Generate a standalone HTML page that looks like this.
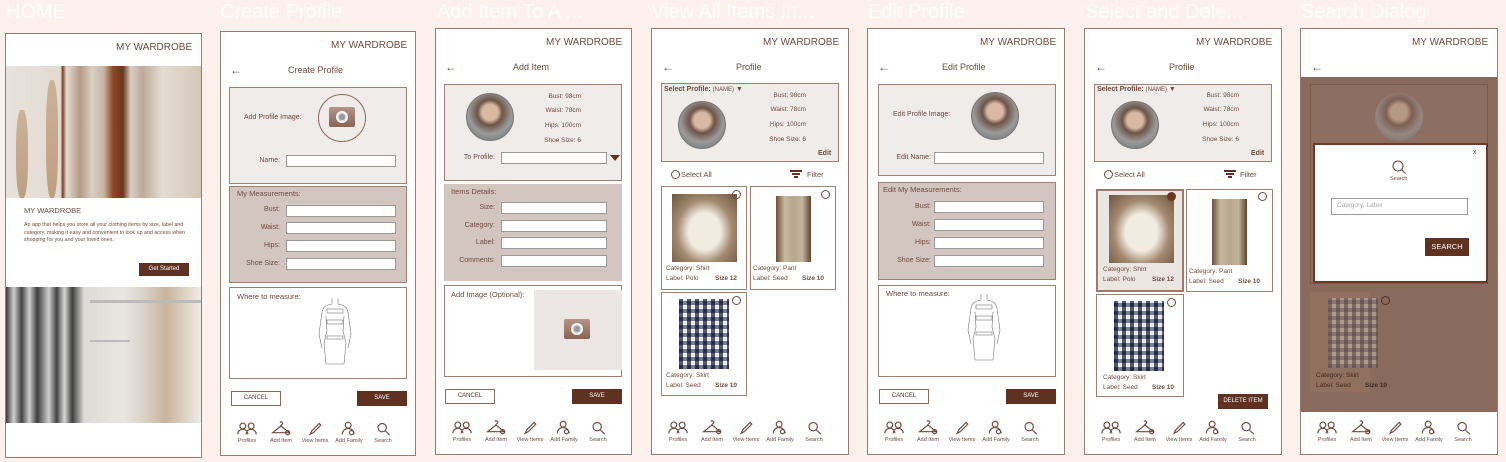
<!DOCTYPE html>
<html><head><meta charset="utf-8"><style>
*{box-sizing:border-box;margin:0;padding:0}
body{width:1506px;height:462px;background:#fcf1ec;position:relative;overflow:hidden;font-family:"Liberation Sans",sans-serif;color:#6e4b3f}
div,span,svg{position:absolute}
.fr{background:#fff;border:1px solid #9b7b6e}
.tt{font-size:20px;color:rgba(255,255,255,.75);top:1px;white-space:nowrap}
.hd{font-size:10px;color:#6e4b3f;white-space:nowrap}
.t{font-size:7px;white-space:nowrap}
.lt{background:#f0ece9;border:1px solid #a08070}
.dk{background:#d3c5bf;border:1px solid #a08070}
.wb{background:#fff;border:1px solid #a08070}
.in{background:#fff;border:1px solid #999;height:12px;width:110px}
.lb{font-size:7px;text-align:right;width:60px;white-space:nowrap}
.bc{border:1px solid #8b6a5e;background:#fff;font-size:6px;text-align:center;line-height:13px;width:50px;height:15px;color:#5e3120}
.bs{background:#5e3120;color:#fff;font-size:6px;text-align:center;line-height:15px;width:50px;height:15px}
.nav{width:170px;height:26px}
.nav>div{position:relative;display:inline-block;width:34px;height:26px;vertical-align:top}
.nav svg{left:7px;top:0;width:20px;height:15px;fill:none;stroke:#6e4b3f;stroke-width:1.4}
.nav span{left:0;top:17px;width:34px;text-align:center;font-size:5.5px;white-space:nowrap}
.av{border-radius:50%;background:radial-gradient(circle at 50% 40%,#d9b9a3 0 22%,#6c5446 35%,#9a9a9a 60%,#5d6b70 100%);border:1px solid #777}
.cam{width:26px;height:20px;border-radius:2px;background:linear-gradient(#b3958a,#8a6455)}
.cam::after{content:"";position:absolute;left:7px;top:4px;width:12px;height:12px;border-radius:50%;background:radial-gradient(#999 0 30%,#eee 50%,#fff 60%)}
.card{border:1px solid #a08070;background:#fff}
.rc{width:9px;height:9px;border-radius:50%;border:1px solid #6e4b3f}
.shirt{background:radial-gradient(ellipse at 50% 55%,#f1ebe0 0 35%,#a38a70 60%,#6b5442 100%)}
.pant{background:linear-gradient(90deg,#6b5036,#c8b9a2 25%,#b7a68d 50%,#c3b49d 75%,#5e4631)}
.skirt{background:repeating-linear-gradient(90deg,#23304c 0 4px,#e9e5e0 4px 8px),#333}
.skirt::after{content:"";position:absolute;inset:0;background:repeating-linear-gradient(0deg,rgba(30,40,70,.55) 0 4px,rgba(255,255,255,.2) 4px 8px)}
</style></head><body>

<div class="tt" style="left:6px">HOME</div>
<div class="tt" style="left:220px">Create Profile</div>
<div class="tt" style="left:437px">Add Item To A ...</div>
<div class="tt" style="left:651px">View All Items In...</div>
<div class="tt" style="left:868px">Edit Profile</div>
<div class="tt" style="left:1085px">Select and Dele...</div>
<div class="tt" style="left:1301px">Search Dialog</div>

<!-- FRAME 1 -->
<div class="fr" style="left:5px;top:33px;width:197px;height:425px"></div>
<div class="hd" style="left:116px;top:42px">MY WARDROBE</div>
<div style="left:6px;top:66px;width:195px;height:132px;background:linear-gradient(90deg,#e8e2dc 0,#e3dbd2 28%,#7a3f24 29%,#e3dbd2 31%,#b59a85 38%,#d9cfc3 44%,#c6b6a5 50%,#8e4525 55%,#6b3520 60%,#d8cfc5 64%,#bcaa98 70%,#e4ddd3 80%,#d4c7b7 100%)"></div>
<div style="left:16px;top:110px;width:12px;height:88px;background:linear-gradient(#c7a789,#b48f6c);border-radius:40%;opacity:.8"></div>
<div style="left:46px;top:80px;width:12px;height:118px;background:linear-gradient(#c7a789,#b48f6c);border-radius:40%;opacity:.8"></div>
<div class="t" style="left:24px;top:206px;font-size:7.5px">MY WARDROBE</div>
<div style="left:24px;top:222px;width:170px;font-size:5.3px;line-height:7.5px;white-space:normal">An app that helps you store all your clothing items by size, label and category, making it easy and convenient to look up and access when shopping for you and your loved ones.</div>
<div class="bs" style="left:139px;top:263px;height:13px;line-height:13px;font-size:6px">Get Started</div>
<div style="left:6px;top:287px;width:195px;height:136px;background:linear-gradient(90deg,#3a3a3a 0,#cfcfcf 4%,#444 8%,#d0d0d0 12%,#3d3d3d 16%,#cfcfcf 22%,#444 26%,#d8d8d8 30%,#3f3f3f 34%,#dedad5 40%,#eae6e1 60%,#d9cfc4 72%,#c9b39c 82%,#efece8 100%)"></div>
<div style="left:90px;top:300px;width:111px;height:3px;background:#bbb"></div>
<div style="left:90px;top:340px;width:40px;height:2px;background:#bbb"></div>

<!-- FRAME 2 -->
<div class="fr" style="left:220px;top:31px;width:196px;height:425px"></div>
<div class="hd" style="left:331px;top:40px">MY WARDROBE</div>
<div class="hd" style="left:230px;top:63px;font-size:12px">&#8592;</div>
<div class="hd" style="left:288px;top:65px;font-size:9px">Create Profile</div>
<div class="lt" style="left:229px;top:87px;width:178px;height:97px"></div>
<div class="t" style="left:244px;top:114px">Add Profile Image:</div>
<div style="left:318px;top:94px;width:48px;height:48px;border-radius:50%;border:1px solid #8b6a5e"></div>
<div class="cam" style="left:329px;top:107px"></div>
<div class="lb" style="left:220px;top:157px">Name:</div>
<div class="in" style="left:286px;top:155px"></div>
<div class="dk" style="left:229px;top:186px;width:178px;height:97px"></div>
<div class="t" style="left:237px;top:189px;font-size:7.5px">My Measurements:</div>
<div class="lb" style="left:220px;top:206px">Bust:</div><div class="in" style="left:286px;top:205px"></div>
<div class="lb" style="left:220px;top:224px">Waist:</div><div class="in" style="left:286px;top:222px"></div>
<div class="lb" style="left:220px;top:242px">Hips:</div><div class="in" style="left:286px;top:240px"></div>
<div class="lb" style="left:220px;top:260px">Shoe Size:</div><div class="in" style="left:286px;top:258px"></div>
<div class="wb" style="left:229px;top:287px;width:178px;height:92px"></div>
<div class="t" style="left:237px;top:292px;font-size:7.5px">Where to measure:</div>
<svg style="left:315px;top:296px;width:40px;height:70px" viewBox="0 0 40 70" fill="none" stroke="#777" stroke-width=".6"><path d="M17 2v6c-6 1-9 3-10 8l-3 22 3 14M23 2v6c6 1 9 3 10 8l3 22-3 14M11 20l1 15-3 12 2 21h18l2-21-3-12 1-15"/><rect x="12" y="13" width="16" height="4"/><rect x="12" y="24" width="16" height="4"/><rect x="12" y="40" width="16" height="3"/></svg>
<div class="bc" style="left:231px;top:391px">CANCEL</div>
<div class="bs" style="left:357px;top:391px">SAVE</div>
<div class="nav" style="left:230px;top:421px">
<div><svg viewBox="0 0 24 16"><circle cx="7" cy="5" r="3.5"/><circle cx="17" cy="5" r="3.5"/><path d="M1 15c0-4 3-6 6-6s6 2 6 6M11 15c0-4 3-6 6-6s6 2 6 6"/></svg><span>Profiles</span></div><div><svg viewBox="0 0 24 16"><path d="M11 6c0-2 3-2 3-4s-3-3-3-1M12 5L2 13h20z"/><circle cx="20" cy="13" r="2.5"/></svg><span>Add Item</span></div><div><svg viewBox="0 0 24 16"><path d="M6 15l2-4 9-9 2 2-9 9z"/></svg><span>View Items</span></div><div><svg viewBox="0 0 24 16"><circle cx="11" cy="4" r="3.5"/><path d="M4 15c0-4 3-7 7-7s7 3 7 7"/><circle cx="15" cy="13" r="2.5"/></svg><span>Add Family</span></div><div><svg viewBox="0 0 24 16"><circle cx="11" cy="7" r="5"/><path d="M15 11l5 5"/></svg><span>Search</span></div></div>

<!-- FRAME 3 -->
<div class="fr" style="left:435px;top:28px;width:197px;height:427px"></div>
<div class="hd" style="left:546px;top:37px">MY WARDROBE</div>
<div class="hd" style="left:445px;top:60px;font-size:12px">&#8592;</div>
<div class="hd" style="left:513px;top:62px;font-size:9px">Add Item</div>
<div class="lt" style="left:444px;top:84px;width:178px;height:97px"></div>
<div class="av" style="left:466px;top:93px;width:48px;height:48px"></div>
<div class="t" style="left:545px;top:93px;width:36px;text-align:right;font-size:6.5px">Bust: 98cm</div>
<div class="t" style="left:535px;top:107px;width:46px;text-align:right;font-size:6.5px">Waist: 78cm</div>
<div class="t" style="left:535px;top:122px;width:46px;text-align:right;font-size:6.5px">Hips: 100cm</div>
<div class="t" style="left:530px;top:137px;width:51px;text-align:right;font-size:6.5px">Shoe Size: 6</div>
<div class="lb" style="left:435px;top:154px">To Profile:</div>
<div class="in" style="left:501px;top:152px;width:106px"></div>
<div style="left:610px;top:155px;width:0;height:0;border-left:5px solid transparent;border-right:5px solid transparent;border-top:6px solid #5e3120"></div>
<div class="dk" style="left:444px;top:184px;width:178px;height:97px;border-color:#d3c5bf"></div>
<div class="t" style="left:451px;top:187px;font-size:7.5px">Items Details:</div>
<div class="lb" style="left:435px;top:204px">Size:</div><div class="in" style="left:501px;top:202px;width:106px"></div>
<div class="lb" style="left:435px;top:222px">Category:</div><div class="in" style="left:501px;top:220px;width:106px"></div>
<div class="lb" style="left:435px;top:239px">Label:</div><div class="in" style="left:501px;top:237px;width:106px"></div>
<div class="lb" style="left:435px;top:257px">Comments:</div><div class="in" style="left:501px;top:255px;width:106px"></div>
<div class="wb" style="left:444px;top:285px;width:178px;height:92px"></div>
<div class="t" style="left:451px;top:290px;font-size:7.5px">Add Image (Optional):</div>
<div style="left:534px;top:290px;width:88px;height:80px;background:#ece7e4"></div>
<div class="cam" style="left:564px;top:319px"></div>
<div class="bc" style="left:445px;top:389px">CANCEL</div>
<div class="bs" style="left:572px;top:389px">SAVE</div>
<div class="nav" style="left:445px;top:420px">
<div><svg viewBox="0 0 24 16"><circle cx="7" cy="5" r="3.5"/><circle cx="17" cy="5" r="3.5"/><path d="M1 15c0-4 3-6 6-6s6 2 6 6M11 15c0-4 3-6 6-6s6 2 6 6"/></svg><span>Profiles</span></div><div><svg viewBox="0 0 24 16"><path d="M11 6c0-2 3-2 3-4s-3-3-3-1M12 5L2 13h20z"/><circle cx="20" cy="13" r="2.5"/></svg><span>Add Item</span></div><div><svg viewBox="0 0 24 16"><path d="M6 15l2-4 9-9 2 2-9 9z"/></svg><span>View Items</span></div><div><svg viewBox="0 0 24 16"><circle cx="11" cy="4" r="3.5"/><path d="M4 15c0-4 3-7 7-7s7 3 7 7"/><circle cx="15" cy="13" r="2.5"/></svg><span>Add Family</span></div><div><svg viewBox="0 0 24 16"><circle cx="11" cy="7" r="5"/><path d="M15 11l5 5"/></svg><span>Search</span></div></div>

<!-- FRAME 4 -->
<div class="fr" style="left:651px;top:28px;width:198px;height:427px"></div>
<div class="hd" style="left:763px;top:37px">MY WARDROBE</div>
<div class="hd" style="left:662px;top:60px;font-size:12px">&#8592;</div>
<div class="hd" style="left:736px;top:62px;font-size:9px">Profile</div>
<div class="lt" style="left:661px;top:83px;width:178px;height:79px"></div>
<div class="t" style="left:664px;top:86px;font-weight:bold;font-size:7px">Select Profile: <span style="position:static;font-weight:normal;font-size:6px">(NAME)</span> &#9660;</div>
<div class="av" style="left:678px;top:101px;width:48px;height:48px"></div>
<div class="t" style="left:770px;top:92px;width:36px;text-align:right;font-size:6.5px">Bust: 98cm</div>
<div class="t" style="left:760px;top:106px;width:46px;text-align:right;font-size:6.5px">Waist: 78cm</div>
<div class="t" style="left:760px;top:121px;width:46px;text-align:right;font-size:6.5px">Hips: 100cm</div>
<div class="t" style="left:755px;top:136px;width:51px;text-align:right;font-size:6.5px">Shoe Size: 6</div>
<div class="t" style="left:818px;top:150px;font-weight:bold">Edit</div>
<div class="rc" style="left:671px;top:170px"></div><div class="t" style="left:681px;top:170px;font-size:7.5px">Select All</div>
<div style="left:790px;top:170px;width:12px;height:2px;background:#5e3120"></div>
<div style="left:792px;top:173px;width:8px;height:2px;background:#5e3120"></div>
<div style="left:794px;top:176px;width:4px;height:2px;background:#5e3120"></div>
<div class="t" style="left:807px;top:170px;font-size:7.5px">Filter</div>
<div class="card" style="left:661px;top:186px;width:86px;height:104px"></div>
<div class="shirt" style="left:672px;top:194px;width:65px;height:68px"></div>
<div class="rc" style="left:732px;top:190px"></div>
<div class="t" style="left:666px;top:265px;font-size:6.5px">Category: Shirt</div><div class="t" style="left:666px;top:275px;font-size:6.5px">Label: Polo</div><div class="t" style="left:715px;top:275px;font-size:6.5px;font-weight:bold">Size 12</div>
<div class="card" style="left:750px;top:186px;width:86px;height:104px"></div>
<div class="pant" style="left:776px;top:196px;width:35px;height:66px"></div>
<div class="rc" style="left:821px;top:190px"></div>
<div class="t" style="left:753px;top:265px;font-size:6.5px">Category: Pant</div><div class="t" style="left:753px;top:275px;font-size:6.5px">Label: Seed</div><div class="t" style="left:802px;top:275px;font-size:6.5px;font-weight:bold">Size 10</div>
<div class="card" style="left:661px;top:292px;width:86px;height:104px"></div>
<div class="skirt" style="left:679px;top:299px;width:50px;height:70px"></div>
<div class="rc" style="left:732px;top:296px"></div>
<div class="t" style="left:666px;top:372px;font-size:6.5px">Category: Skirt</div><div class="t" style="left:666px;top:382px;font-size:6.5px">Label: Seed</div><div class="t" style="left:715px;top:382px;font-size:6.5px;font-weight:bold">Size 10</div>
<div class="nav" style="left:661px;top:420px">
<div><svg viewBox="0 0 24 16"><circle cx="7" cy="5" r="3.5"/><circle cx="17" cy="5" r="3.5"/><path d="M1 15c0-4 3-6 6-6s6 2 6 6M11 15c0-4 3-6 6-6s6 2 6 6"/></svg><span>Profiles</span></div><div><svg viewBox="0 0 24 16"><path d="M11 6c0-2 3-2 3-4s-3-3-3-1M12 5L2 13h20z"/><circle cx="20" cy="13" r="2.5"/></svg><span>Add Item</span></div><div><svg viewBox="0 0 24 16"><path d="M6 15l2-4 9-9 2 2-9 9z"/></svg><span>View Items</span></div><div><svg viewBox="0 0 24 16"><circle cx="11" cy="4" r="3.5"/><path d="M4 15c0-4 3-7 7-7s7 3 7 7"/><circle cx="15" cy="13" r="2.5"/></svg><span>Add Family</span></div><div><svg viewBox="0 0 24 16"><circle cx="11" cy="7" r="5"/><path d="M15 11l5 5"/></svg><span>Search</span></div></div>

<!-- FRAME 5 -->
<div class="fr" style="left:867px;top:28px;width:198px;height:427px"></div>
<div class="hd" style="left:980px;top:37px">MY WARDROBE</div>
<div class="hd" style="left:878px;top:60px;font-size:12px">&#8592;</div>
<div class="hd" style="left:942px;top:62px;font-size:9px">Edit Profile</div>
<div class="lt" style="left:878px;top:84px;width:178px;height:92px"></div>
<div class="t" style="left:893px;top:111px">Edit Profile Image:</div>
<div class="av" style="left:971px;top:92px;width:48px;height:48px"></div>
<div class="lb" style="left:871px;top:154px">Edit Name:</div>
<div class="in" style="left:934px;top:152px"></div>
<div class="dk" style="left:878px;top:182px;width:178px;height:98px"></div>
<div class="t" style="left:883px;top:185px;font-size:7.5px">Edit My Measurements:</div>
<div class="lb" style="left:871px;top:203px">Bust:</div><div class="in" style="left:934px;top:201px"></div>
<div class="lb" style="left:871px;top:221px">Waist:</div><div class="in" style="left:934px;top:219px"></div>
<div class="lb" style="left:871px;top:239px">Hips:</div><div class="in" style="left:934px;top:237px"></div>
<div class="lb" style="left:871px;top:257px">Shoe Size:</div><div class="in" style="left:934px;top:255px"></div>
<div class="wb" style="left:878px;top:285px;width:178px;height:92px"></div>
<div class="t" style="left:886px;top:289px;font-size:7.5px">Where to measure:</div>
<svg style="left:964px;top:292px;width:40px;height:70px" viewBox="0 0 40 70" fill="none" stroke="#777" stroke-width=".6"><path d="M17 2v6c-6 1-9 3-10 8l-3 22 3 14M23 2v6c6 1 9 3 10 8l3 22-3 14M11 20l1 15-3 12 2 21h18l2-21-3-12 1-15"/><rect x="12" y="13" width="16" height="4"/><rect x="12" y="24" width="16" height="4"/><rect x="12" y="40" width="16" height="3"/></svg>
<div class="bc" style="left:879px;top:389px">CANCEL</div>
<div class="bs" style="left:1006px;top:389px">SAVE</div>
<div class="nav" style="left:877px;top:420px">
<div><svg viewBox="0 0 24 16"><circle cx="7" cy="5" r="3.5"/><circle cx="17" cy="5" r="3.5"/><path d="M1 15c0-4 3-6 6-6s6 2 6 6M11 15c0-4 3-6 6-6s6 2 6 6"/></svg><span>Profiles</span></div><div><svg viewBox="0 0 24 16"><path d="M11 6c0-2 3-2 3-4s-3-3-3-1M12 5L2 13h20z"/><circle cx="20" cy="13" r="2.5"/></svg><span>Add Item</span></div><div><svg viewBox="0 0 24 16"><path d="M6 15l2-4 9-9 2 2-9 9z"/></svg><span>View Items</span></div><div><svg viewBox="0 0 24 16"><circle cx="11" cy="4" r="3.5"/><path d="M4 15c0-4 3-7 7-7s7 3 7 7"/><circle cx="15" cy="13" r="2.5"/></svg><span>Add Family</span></div><div><svg viewBox="0 0 24 16"><circle cx="11" cy="7" r="5"/><path d="M15 11l5 5"/></svg><span>Search</span></div></div>

<!-- FRAME 6 -->
<div class="fr" style="left:1084px;top:28px;width:198px;height:427px"></div>
<div class="hd" style="left:1196px;top:37px">MY WARDROBE</div>
<div class="hd" style="left:1095px;top:60px;font-size:12px">&#8592;</div>
<div class="hd" style="left:1169px;top:62px;font-size:9px">Profile</div>
<div class="lt" style="left:1094px;top:84px;width:178px;height:78px"></div>
<div class="t" style="left:1097px;top:86px;font-weight:bold;font-size:7px">Select Profile: <span style="position:static;font-weight:normal;font-size:6px">(NAME)</span> &#9660;</div>
<div class="av" style="left:1111px;top:101px;width:48px;height:48px"></div>
<div class="t" style="left:1203px;top:92px;width:36px;text-align:right;font-size:6.5px">Bust: 98cm</div>
<div class="t" style="left:1193px;top:106px;width:46px;text-align:right;font-size:6.5px">Waist: 78cm</div>
<div class="t" style="left:1193px;top:121px;width:46px;text-align:right;font-size:6.5px">Hips: 100cm</div>
<div class="t" style="left:1188px;top:136px;width:51px;text-align:right;font-size:6.5px">Shoe Size: 6</div>
<div class="t" style="left:1251px;top:150px;font-weight:bold">Edit</div>
<div class="rc" style="left:1104px;top:170px"></div><div class="t" style="left:1114px;top:170px;font-size:7.5px">Select All</div>
<div style="left:1224px;top:170px;width:12px;height:2px;background:#5e3120"></div>
<div style="left:1226px;top:173px;width:8px;height:2px;background:#5e3120"></div>
<div style="left:1228px;top:176px;width:4px;height:2px;background:#5e3120"></div>
<div class="t" style="left:1240px;top:170px;font-size:7.5px">Filter</div>
<div class="card" style="left:1096px;top:189px;width:88px;height:103px;background:#ece6e3;border:2px solid #9b7b6e"></div>
<div class="shirt" style="left:1109px;top:195px;width:65px;height:68px"></div>
<div class="rc" style="left:1167px;top:192px;background:#6e3424;border-color:#6e3424"></div>
<div class="t" style="left:1103px;top:266px;font-size:6.5px">Category: Shirt</div><div class="t" style="left:1103px;top:276px;font-size:6.5px">Label: Polo</div><div class="t" style="left:1152px;top:276px;font-size:6.5px;font-weight:bold">Size 12</div>
<div class="card" style="left:1186px;top:189px;width:87px;height:103px"></div>
<div class="pant" style="left:1212px;top:199px;width:35px;height:66px"></div>
<div class="rc" style="left:1258px;top:192px"></div>
<div class="t" style="left:1189px;top:268px;font-size:6.5px">Category: Pant</div><div class="t" style="left:1189px;top:278px;font-size:6.5px">Label: Seed</div><div class="t" style="left:1238px;top:278px;font-size:6.5px;font-weight:bold">Size 10</div>
<div class="card" style="left:1096px;top:294px;width:88px;height:103px"></div>
<div class="skirt" style="left:1114px;top:301px;width:50px;height:70px"></div>
<div class="rc" style="left:1167px;top:298px"></div>
<div class="t" style="left:1103px;top:374px;font-size:6.5px">Category: Skirt</div><div class="t" style="left:1103px;top:384px;font-size:6.5px">Label: Seed</div><div class="t" style="left:1152px;top:384px;font-size:6.5px;font-weight:bold">Size 10</div>
<div class="bs" style="left:1218px;top:394px;font-size:6px">DELETE ITEM</div>
<div class="nav" style="left:1094px;top:420px">
<div><svg viewBox="0 0 24 16"><circle cx="7" cy="5" r="3.5"/><circle cx="17" cy="5" r="3.5"/><path d="M1 15c0-4 3-6 6-6s6 2 6 6M11 15c0-4 3-6 6-6s6 2 6 6"/></svg><span>Profiles</span></div><div><svg viewBox="0 0 24 16"><path d="M11 6c0-2 3-2 3-4s-3-3-3-1M12 5L2 13h20z"/><circle cx="20" cy="13" r="2.5"/></svg><span>Add Item</span></div><div><svg viewBox="0 0 24 16"><path d="M6 15l2-4 9-9 2 2-9 9z"/></svg><span>View Items</span></div><div><svg viewBox="0 0 24 16"><circle cx="11" cy="4" r="3.5"/><path d="M4 15c0-4 3-7 7-7s7 3 7 7"/><circle cx="15" cy="13" r="2.5"/></svg><span>Add Family</span></div><div><svg viewBox="0 0 24 16"><circle cx="11" cy="7" r="5"/><path d="M15 11l5 5"/></svg><span>Search</span></div></div>

<!-- FRAME 7 -->
<div class="fr" style="left:1300px;top:28px;width:198px;height:427px"></div>
<div class="hd" style="left:1412px;top:37px">MY WARDROBE</div>
<div class="hd" style="left:1311px;top:60px;font-size:12px">&#8592;</div>
<div style="left:1301px;top:77px;width:196px;height:335px;background:#8a6a5c"></div>
<div style="left:1310px;top:84px;width:178px;height:200px;border:1px solid #7a5a4c;background:#8e6e60"></div>
<div class="av" style="left:1375px;top:93px;width:48px;height:48px;opacity:.55;border:none"></div>
<div style="left:1310px;top:292px;width:60px;height:100px;background:#92705f"></div>
<div class="skirt" style="left:1328px;top:298px;width:50px;height:70px;opacity:.35"></div>
<div class="rc" style="left:1381px;top:296px;border-color:#4a3028"></div>
<div class="t" style="left:1316px;top:372px;font-size:6.5px;color:#3c2820">Category: Skirt</div><div class="t" style="left:1316px;top:382px;font-size:6.5px;color:#3c2820">Label: Seed</div><div class="t" style="left:1365px;top:382px;font-size:6.5px;font-weight:bold;color:#3c2820">Size 10</div>
<div style="left:1313px;top:143px;width:175px;height:140px;background:#fff;border:2px solid #6b3a26"></div>
<div class="t" style="left:1473px;top:149px">x</div>
<svg style="left:1391px;top:160px;width:16px;height:14px" viewBox="0 0 16 14" fill="none" stroke="#6e4b3f" stroke-width="1.1"><circle cx="7" cy="6" r="5"/><path d="M10.5 9.5l4 4"/></svg>
<div class="t" style="left:1390px;top:176px;font-size:5.5px">Search</div>
<div style="left:1331px;top:198px;width:137px;height:17px;border:1px solid #999;background:#fff"></div>
<div class="t" style="left:1337px;top:202px;color:#aaa;font-size:6.5px">Category, Label</div>
<div class="bs" style="left:1425px;top:238px;width:44px;height:18px;line-height:18px;font-size:7.5px">SEARCH</div>
<div class="nav" style="left:1310px;top:420px">
<div><svg viewBox="0 0 24 16"><circle cx="7" cy="5" r="3.5"/><circle cx="17" cy="5" r="3.5"/><path d="M1 15c0-4 3-6 6-6s6 2 6 6M11 15c0-4 3-6 6-6s6 2 6 6"/></svg><span>Profiles</span></div><div><svg viewBox="0 0 24 16"><path d="M11 6c0-2 3-2 3-4s-3-3-3-1M12 5L2 13h20z"/><circle cx="20" cy="13" r="2.5"/></svg><span>Add Item</span></div><div><svg viewBox="0 0 24 16"><path d="M6 15l2-4 9-9 2 2-9 9z"/></svg><span>View Items</span></div><div><svg viewBox="0 0 24 16"><circle cx="11" cy="4" r="3.5"/><path d="M4 15c0-4 3-7 7-7s7 3 7 7"/><circle cx="15" cy="13" r="2.5"/></svg><span>Add Family</span></div><div><svg viewBox="0 0 24 16"><circle cx="11" cy="7" r="5"/><path d="M15 11l5 5"/></svg><span>Search</span></div></div>

</body></html>
